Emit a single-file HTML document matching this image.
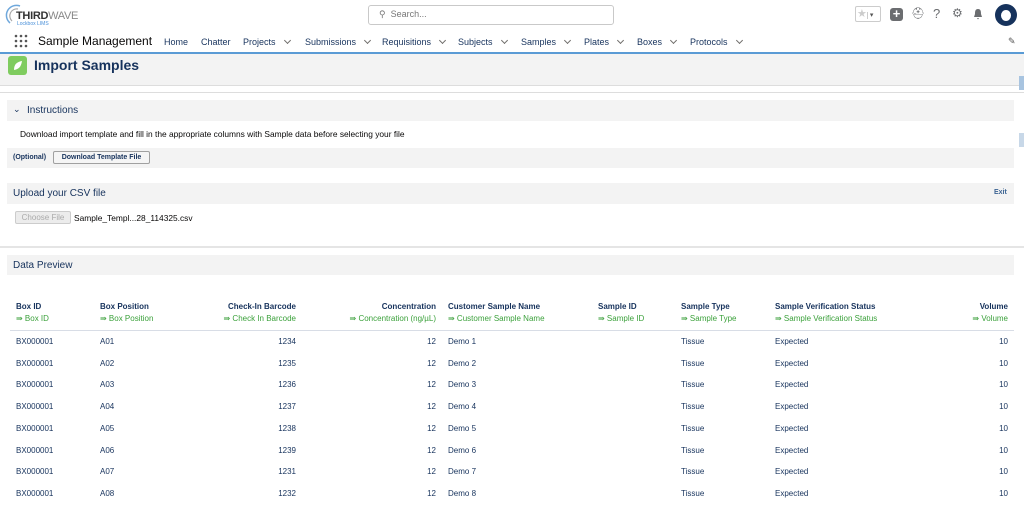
<!DOCTYPE html>
<html><head><meta charset="utf-8"><style>
*{margin:0;padding:0;box-sizing:border-box}
body{width:1024px;height:513px;overflow:hidden;background:#fff;font-family:"Liberation Sans",sans-serif;color:#16325c;position:relative}
.a{position:absolute;white-space:nowrap}
.bar{position:absolute;left:7px;width:1007px;background:#f3f3f3}
.nav{font-size:9px;color:#16325c;top:37px}
.chev{display:inline-block;width:5px;height:5px;border-right:1px solid #706e6b;border-bottom:1px solid #706e6b;transform:rotate(45deg);margin-left:9px;position:relative;top:-2px}
.h{font-size:8px;font-weight:bold;top:302px}
.g{font-size:8px;color:#3ba13b;top:314px}
.r{font-size:8px}
</style></head><body>
<svg class="a" style="left:4px;top:3px" width="20" height="24"><path d="M16 3 A10 10 0 0 0 6 20" stroke="#6fa8dc" stroke-width="1.5" fill="none"/><path d="M14 6 A7 7 0 0 0 8 18" stroke="#aaa" stroke-width="1.2" fill="none"/></svg>
<div class="a" style="left:16px;top:10px;font-size:11px;font-weight:bold;color:#333;letter-spacing:-.3px">THIRD<span style="font-weight:normal;color:#888">WAVE</span></div>
<div class="a" style="left:17px;top:21px;font-size:5px;color:#4a90d9">Lockbox LIMS</div>
<div class="a" style="left:368px;top:5px;width:246px;height:20px;border:1px solid #c9c9c9;border-radius:3px"></div>
<div class="a" style="left:379px;top:9px;font-size:9px;color:#777">&#9906;&nbsp; Search...</div>
<div class="a" style="left:855px;top:6px;width:26px;height:16px;border:1px solid #ccc;border-radius:2px;font-size:11px;color:#ccc;line-height:14px;padding-left:1px">★<span style="font-size:7px;color:#555;border-left:1px solid #ccc;padding-left:2px">▾</span></div>
<div class="a" style="left:890px;top:8px;width:13px;height:13px;background:#6b6d70;border-radius:3px;color:#fff;font-size:13px;line-height:12px;text-align:center;font-weight:bold">+</div>
<div class="a" style="left:911px;top:7px;font-size:11px;color:#6b6d70">⛑</div>
<div class="a" style="left:933px;top:6px;font-size:13px;color:#6b6d70">?</div>
<div class="a" style="left:952px;top:6px;font-size:12px;color:#6b6d70">⚙</div>
<svg class="a" style="left:972px;top:8px" width="12" height="12"><path d="M6 1 C3 1 3 4 3 6 L2 9 L10 9 L9 6 C9 4 9 1 6 1Z M5 10 L7 10 L6 11.5Z" fill="#6b6d70"/></svg>
<div class="a" style="left:995px;top:4px;width:22px;height:22px;border-radius:50%;background:#16325c"></div>
<div class="a" style="left:1001px;top:10px;width:10px;height:11px;border-radius:50%;background:#fff"></div>
<svg class="a" style="left:14px;top:34px" width="14" height="14"><g fill="#555"><circle cx="2" cy="2" r="1.3"/><circle cx="7" cy="2" r="1.3"/><circle cx="12" cy="2" r="1.3"/><circle cx="2" cy="7" r="1.3"/><circle cx="7" cy="7" r="1.3"/><circle cx="12" cy="7" r="1.3"/><circle cx="2" cy="12" r="1.3"/><circle cx="7" cy="12" r="1.3"/><circle cx="12" cy="12" r="1.3"/></g></svg>
<div class="a" style="left:38px;top:34px;font-size:12px;color:#080707">Sample Management</div>
<div class="a nav" style="left:164px">Home</div>
<div class="a nav" style="left:201px">Chatter</div>
<div class="a nav" style="left:243px">Projects<span class="chev"></span></div>
<div class="a nav" style="left:305px">Submissions<span class="chev"></span></div>
<div class="a nav" style="left:382px">Requisitions<span class="chev"></span></div>
<div class="a nav" style="left:458px">Subjects<span class="chev"></span></div>
<div class="a nav" style="left:521px">Samples<span class="chev"></span></div>
<div class="a nav" style="left:584px">Plates<span class="chev"></span></div>
<div class="a nav" style="left:637px">Boxes<span class="chev"></span></div>
<div class="a nav" style="left:690px">Protocols<span class="chev"></span></div>
<div class="a" style="left:1008px;top:36px;font-size:9px;color:#555">✎</div>
<div class="a" style="left:0;top:52px;width:1024px;height:2px;background:#5a9bd5"></div>
<div class="a" style="left:0;top:54px;width:1024px;height:32px;background:#f3f3f3;border-bottom:1px solid #ddd"></div>
<div class="a" style="left:8px;top:56px;width:19px;height:19px;background:#7fcc5f;border-radius:3px"></div>
<svg class="a" style="left:11px;top:59px" width="13" height="13"><path d="M3 11 C3 5 6 3 11 2 C10 8 8 10 3 11Z" fill="#fff"/></svg>
<div class="a" style="left:34px;top:57px;font-size:14px;font-weight:bold;color:#16325c">Import Samples</div>
<div class="a" style="left:0;top:92px;width:1024px;height:1px;background:#ddd"></div>
<div class="a" style="left:1019px;top:76px;width:5px;height:14px;background:#a8c4e0"></div>
<div class="a" style="left:1019px;top:133px;width:5px;height:14px;background:#c8d8e8"></div>
<div class="bar" style="top:100px;height:21px"></div>
<div class="a" style="left:13px;top:104px;font-size:9px;color:#16325c">⌄</div>
<div class="a" style="left:27px;top:105px;font-size:10px">Instructions</div>
<div class="a" style="left:20px;top:129px;font-size:8.4px;color:#080707">Download import template and fill in the appropriate columns with Sample data before selecting your file</div>
<div class="bar" style="top:148px;height:20px"></div>
<div class="a" style="left:13px;top:154px;font-size:7px;font-weight:bold">(Optional)</div>
<div class="a" style="left:53px;top:151px;width:97px;height:13px;border:1px solid #a0a0a0;background:#f5f5f5;border-radius:2px;font-size:7px;font-weight:bold;text-align:center;line-height:11px">Download Template File</div>
<div class="bar" style="top:183px;height:21px"></div>
<div class="a" style="left:13px;top:188px;font-size:10px">Upload your CSV file</div>
<div class="a" style="left:994px;top:189px;font-size:7px;font-weight:bold;color:#3c6493">Exit</div>
<div class="a" style="left:15px;top:211px;width:56px;height:13px;background:#ececec;border:1px solid #ccc;border-radius:2px;font-size:8px;color:#aaa;text-align:center;line-height:11px">Choose File</div>
<div class="a" style="left:74px;top:213px;font-size:8.4px;color:#080707">Sample_Templ...28_114325.csv</div>
<div class="a" style="left:0;top:246px;width:1024px;height:2px;background:#e5e5e5"></div>
<div class="bar" style="top:255px;height:20px"></div>
<div class="a" style="left:13px;top:260px;font-size:10px">Data Preview</div>
<div class="a h" style="left:16px">Box ID</div><div class="a g" style="left:16px">⇛ Box ID</div>
<div class="a h" style="left:100px">Box Position</div><div class="a g" style="left:100px">⇛ Box Position</div>
<div class="a h" style="right:728px">Check-In Barcode</div><div class="a g" style="right:728px">⇛ Check In Barcode</div>
<div class="a h" style="right:588px">Concentration</div><div class="a g" style="right:588px">⇛ Concentration (ng/µL)</div>
<div class="a h" style="left:448px">Customer Sample Name</div><div class="a g" style="left:448px">⇛ Customer Sample Name</div>
<div class="a h" style="left:598px">Sample ID</div><div class="a g" style="left:598px">⇛ Sample ID</div>
<div class="a h" style="left:681px">Sample Type</div><div class="a g" style="left:681px">⇛ Sample Type</div>
<div class="a h" style="left:775px">Sample Verification Status</div><div class="a g" style="left:775px">⇛ Sample Verification Status</div>
<div class="a h" style="right:16px">Volume</div><div class="a g" style="right:16px">⇛ Volume</div>
<div class="a" style="left:10px;top:330px;width:1004px;height:1px;background:#d8dde6"></div>
<div id="rows"></div>
<script>
var bc=[1234,1235,1236,1237,1238,1239,1231,1232],h='';
for(var i=0;i<8;i++){var t=337+i*21.7;
h+='<div class="a r" style="left:16px;top:'+t+'px">BX000001</div><div class="a r" style="left:100px;top:'+t+'px">A0'+(i+1)+'</div><div class="a r" style="right:728px;top:'+t+'px">'+bc[i]+'</div><div class="a r" style="right:588px;top:'+t+'px">12</div><div class="a r" style="left:448px;top:'+t+'px">Demo '+(i+1)+'</div><div class="a r" style="left:681px;top:'+t+'px">Tissue</div><div class="a r" style="left:775px;top:'+t+'px">Expected</div><div class="a r" style="right:16px;top:'+t+'px">10</div>';}
document.getElementById('rows').innerHTML=h;
</script>
</body></html>
